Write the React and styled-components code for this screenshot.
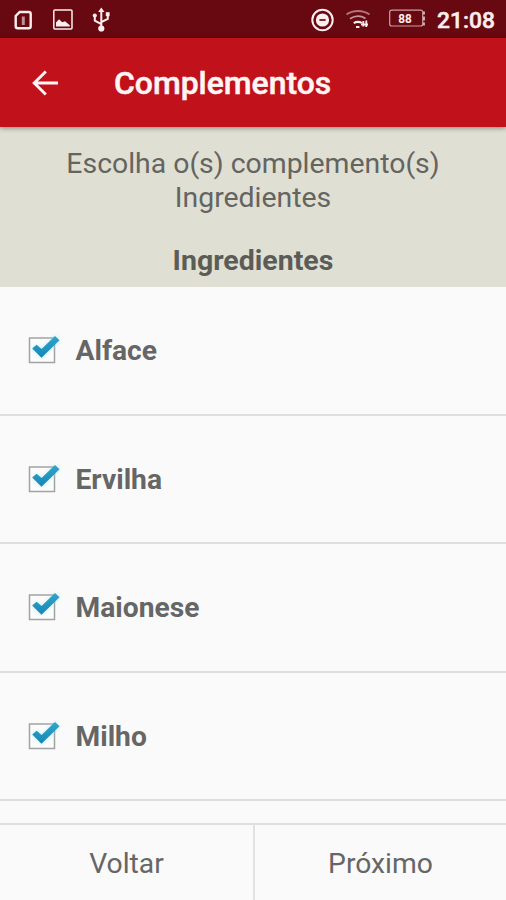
import React from 'react';
import styled, { createGlobalStyle } from 'styled-components';

const GlobalStyle = createGlobalStyle`
  * { box-sizing: border-box; }
  body { margin: 0; background: #fafafa; font-family: Roboto, "Noto Sans", sans-serif; color: #666; }
`;

const Screen = styled.div`
  width: 506px;
  height: 900px;
  display: flex;
  flex-direction: column;
  overflow: hidden;
  background: #fafafa;
`;

const StatusBar = styled.header`
  flex: 0 0 38px;
  display: flex;
  justify-content: space-between;
  background: #680811;
  color: #fceeee;
`;

const StatusIcons = styled.svg`
  display: block;
  height: 38px;
  width: ${(p) => p.$width}px;
`;

const StatusRight = styled.div`
  display: flex;
`;

const Clock = styled.time`
  width: 76px;
  padding: 4px 0 0 7px;
  font-size: 22.8px;
  line-height: 34px;
  font-weight: 500;
  -webkit-text-stroke: 0.5px currentColor;
  white-space: nowrap;
`;

const BatteryLevel = styled.text`
  font: 700 13px Roboto, sans-serif;
`;

const AppBar = styled.nav`
  flex: 0 0 89px;
  display: flex;
  align-items: center;
  padding-left: 31px;
  background: #c1121c;
  color: #fff5f4;
  box-shadow: 0 1px 5px rgba(0, 0, 0, 0.42);
  z-index: 1;
`;

const BackButton = styled.button`
  width: 83px;
  height: 28px;
  padding: 0;
  border: 0;
  background: none;
  color: inherit;
  svg { display: block; }
`;

const Title = styled.h1`
  margin: 0;
  font-size: 31.9px;
  line-height: 40px;
  font-weight: 500;
  -webkit-text-stroke: 0.5px currentColor;
  white-space: nowrap;
`;

const Intro = styled.section`
  flex: 0 0 160px;
  background: #dfdfd3;
  color: #646460;
  text-align: center;
  padding-top: 20px;
`;

const Prompt = styled.p`
  margin: 0;
  font-size: 28.4px;
  line-height: 34px;
  white-space: nowrap;
`;

const GroupTitle = styled.h2`
  margin: 29px 0 0;
  font-size: 28.5px;
  line-height: 34px;
  font-weight: 700;
  color: #5c5c57;
`;

const List = styled.ul`
  flex: 1;
  min-height: 0;
  overflow: hidden;
  margin: 0;
  padding: 0;
  list-style: none;
`;

const Row = styled.li`
  height: 128.5px;
  padding-left: 27px;
  display: flex;
  align-items: center;
  border-bottom: 2px solid #dedede;
`;

const CheckIcon = styled.svg`
  width: 36px;
  height: 36px;
  flex: none;
`;

const RowLabel = styled.span`
  margin-left: 12.5px;
  padding-top: 2px;
  font-size: 28.2px;
  line-height: 34px;
  font-weight: 700;
  color: #666;
`;

const Footer = styled.footer`
  flex: 0 0 77px;
  display: grid;
  grid-template-columns: 255px 251px;
  border-top: 2px solid #dfdfdf;
`;

const FooterButton = styled.button`
  border: 0;
  border-right: ${(p) => (p.$divided ? '2px solid #e2e2e2' : '0')};
  padding: 2px 0 0;
  background: #fafafa;
  color: #666;
  font: 400 28.3px/34px Roboto, sans-serif;
`;

const ingredients = ['Alface', 'Ervilha', 'Maionese', 'Milho'];

function NotificationIcons() {
  return (
    <StatusIcons $width={130} viewBox="0 0 130 38" fill="none" stroke="currentColor">
      <path d="M19.7 12h9a2 2 0 0 1 2 2v12.2a2 2 0 0 1-2 2h-11a2 2 0 0 1-2-2V16z" strokeWidth="2.4" />
      <path d="M23.3 16.5v8.5" strokeWidth="3" opacity=".6" />
      <rect x="53.8" y="10" width="18.2" height="19" rx="1" strokeWidth="1.5" />
      <path d="M56 26.6v-4l3-3.3 3.2 2.9 2.8-1 4.8 4v1.4z" fill="currentColor" stroke="none" />
      <path d="M101.3 10v18M101.3 24.2l-6.5-3.6V15M101.3 22.2l6.5-3.4V14" strokeWidth="2" />
      <path d="m98.1 12 3.2-4.5 3.2 4.5z" fill="currentColor" stroke="none" />
      <circle cx="101.3" cy="28.5" r="3.1" fill="currentColor" stroke="none" />
      <circle cx="94.8" cy="15.5" r="2.1" fill="currentColor" stroke="none" />
      <path d="M105.8 12.2h3.8v4h-3.8z" fill="currentColor" stroke="none" />
    </StatusIcons>
  );
}

function SystemIcons() {
  return (
    <StatusIcons $width={130} viewBox="300 0 130 38" fill="none" stroke="currentColor">
      <circle cx="322.5" cy="20" r="10.2" strokeWidth="2" />
      <circle cx="322.5" cy="20" r="6.6" fill="currentColor" stroke="none" />
      <path d="M319.4 20h6.2" stroke="#680811" strokeWidth="1.7" />
      <path d="M346.5 14.5c7-4.6 16-4.6 23 0" strokeWidth="2" opacity=".48" />
      <path d="M350 18.8c5-3.2 11-3.2 15.5-.3" strokeWidth="1.8" opacity=".62" />
      <path d="M353.7 23.2c2.6-1.6 5.8-1.6 8.2-.2" strokeWidth="2" />
      <path d="M356 27h3.4" strokeWidth="2" />
      <path d="M363.3 21v5.5M366.3 20.5v6.5M361 24.5h7" strokeWidth="1.8" />
      <rect x="389.7" y="10.2" width="33" height="15.8" rx="2" strokeWidth="1.2" opacity=".66" />
      <path d="M424 11.5v3M424 16.5v4M424 22.5v3" strokeWidth="1.8" opacity=".75" />
      <BatteryLevel x="405" y="23" textAnchor="middle" textLength="13.5" lengthAdjust="spacingAndGlyphs" fill="currentColor" stroke="none">88</BatteryLevel>
    </StatusIcons>
  );
}

function Checkbox() {
  return (
    <CheckIcon viewBox="0 0 36 36" role="checkbox" aria-checked="true">
      <defs>
        <linearGradient id="tick" x1="0" y1="0" x2="0" y2="1">
          <stop offset="0" stopColor="#2fa6cb" />
          <stop offset="1" stopColor="#1687b4" />
        </linearGradient>
        <filter id="glow" x="-40%" y="-40%" width="180%" height="180%">
          <feGaussianBlur stdDeviation="2" />
        </filter>
      </defs>
      <rect x="2.5" y="6" width="25" height="24.5" fill="#fcfcfc" stroke="#a2a2a2" strokeWidth="1.5" />
      <path d="m5.2 16.5 4.4-3.8 5 4.4L28 4l4.5 4.2-18 17.6z" fill="#9bdcf2" opacity=".6" filter="url(#glow)" />
      <path d="m5.2 16.5 4.4-3.8 5 4.4L28 4l4.5 4.2-18 17.6z" fill="url(#tick)" />
    </CheckIcon>
  );
}

export default function App() {
  return (
    <Screen>
      <GlobalStyle />
      <StatusBar>
        <NotificationIcons />
        <StatusRight>
          <SystemIcons />
          <Clock>21:08</Clock>
        </StatusRight>
      </StatusBar>
      <AppBar>
        <BackButton aria-label="Voltar">
          <svg width="28" height="28" viewBox="0 0 28 28" fill="none" stroke="currentColor" strokeWidth="2.9">
            <path d="M27 14H3.5M14.8 2.5 3.2 14l11.6 11.5" />
          </svg>
        </BackButton>
        <Title>Complementos</Title>
      </AppBar>
      <Intro>
        <Prompt>Escolha o(s) complemento(s)<br />Ingredientes</Prompt>
        <GroupTitle>Ingredientes</GroupTitle>
      </Intro>
      <List>
        {ingredients.map((name) => (
          <Row key={name}>
            <Checkbox />
            <RowLabel>{name}</RowLabel>
          </Row>
        ))}
      </List>
      <Footer>
        <FooterButton $divided>Voltar</FooterButton>
        <FooterButton>Próximo</FooterButton>
      </Footer>
    </Screen>
  );
}
